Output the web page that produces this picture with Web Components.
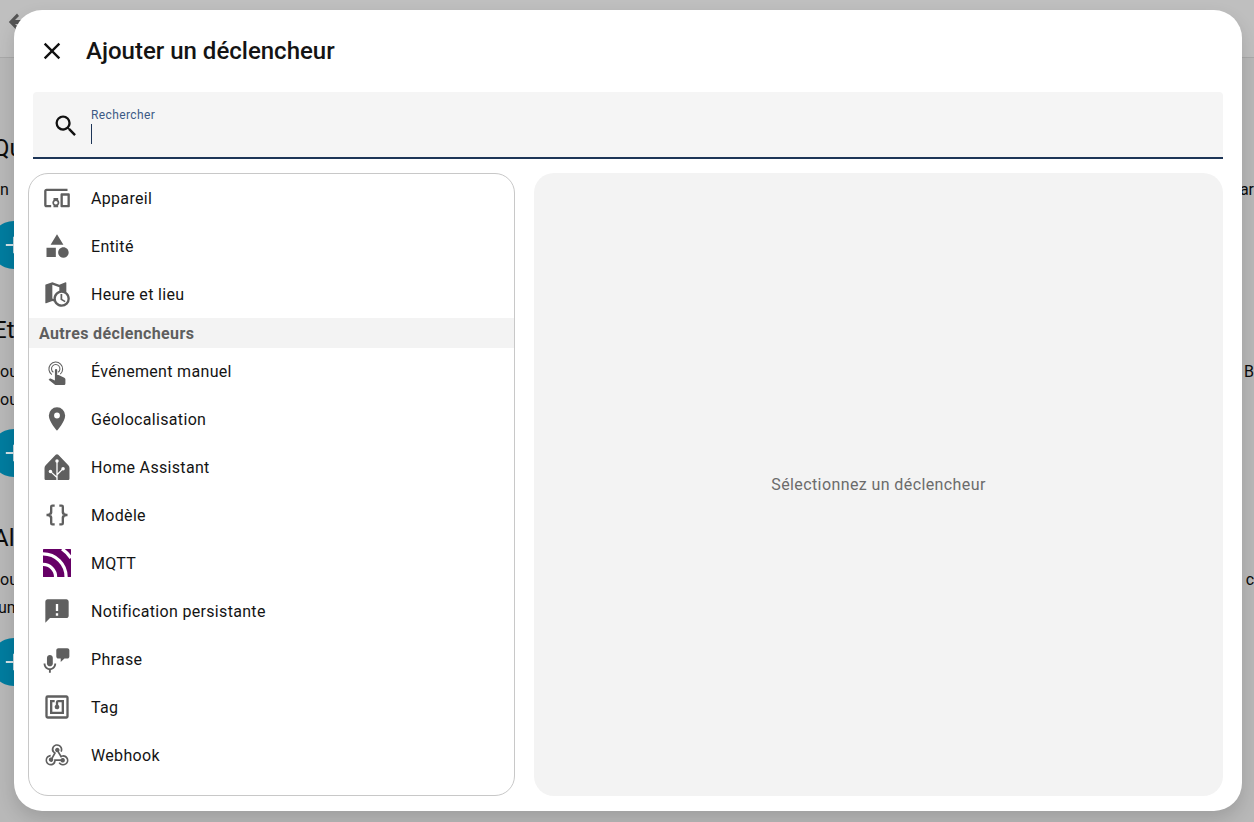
<!DOCTYPE html>
<html lang="fr">
<head>
<meta charset="utf-8">
<title>Ajouter un déclencheur</title>
<style>
  html, body {
    height: 100%;
    margin: 0;
    overflow: hidden;
  }

  body {
    color: #141414;
    font-family: Roboto, "Liberation Sans", sans-serif;
  }
</style>
</head>
<body>
<page-behind></page-behind>
<trigger-dialog heading="Ajouter un déclencheur">
  <search-field slot="search" label="Rechercher"></search-field>
  <trigger-row icon="devices">Appareil</trigger-row>
  <trigger-row icon="shape">Entité</trigger-row>
  <trigger-row icon="mapClock">Heure et lieu</trigger-row>
  <list-heading>Autres déclencheurs</list-heading>
  <trigger-row icon="tap">Événement manuel</trigger-row>
  <trigger-row icon="marker">Géolocalisation</trigger-row>
  <trigger-row icon="home">Home Assistant</trigger-row>
  <trigger-row icon="braces">Modèle</trigger-row>
  <trigger-row icon="mqtt">MQTT</trigger-row>
  <trigger-row icon="alert">Notification persistante</trigger-row>
  <trigger-row icon="phrase">Phrase</trigger-row>
  <trigger-row icon="nfc">Tag</trigger-row>
  <trigger-row icon="webhook">Webhook</trigger-row>
  <span slot="empty">Sélectionnez un déclencheur</span>
</trigger-dialog>

<script>
const HOOK = 'M10.46,19C9,21.07 6.15,21.59 4.09,20.15C2.04,18.71 1.56,15.84 3,13.75C3.87,12.5 5.21,11.83 6.58,11.77V13.2C5.62,13.27 4.69,13.76 4.1,14.62C3.1,16.08 3.38,18.05 4.74,19.01C6.11,19.97 8,19.63 9,18.17C9.31,17.72 9.5,17.22 9.56,16.72V15.71L15.12,15.68L15.19,15.57C15.71,14.64 16.9,14.31 17.81,14.84C18.73,15.37 19.05,16.55 18.53,17.47C18,18.38 16.8,18.71 15.88,18.18C15.46,17.94 15.15,17.55 15,17.11L10.9,17.13C10.8,17.73 10.7,18.4 10.46,19Z';

const ICONS = {
  back: '<path d="M20,10V14H10L14,18L12,20.5L3.8,12L12,3.5L14,6L10,10H20Z"/>',
  plus: '<path d="M19,12.8H12.8V19H11.2V12.8H5V11.2H11.2V5H12.8V11.2H19V12.8Z"/>',
  close: '<path d="M19,6.41L17.59,5L12,10.59L6.41,5L5,6.41L10.59,12L5,17.59L6.41,19L12,13.41L17.59,19L19,17.59L13.41,12L19,6.41Z"/>',
  magnify: '<path d="M9.5,3A6.5,6.5 0 0,1 16,9.5C16,11.11 15.41,12.59 14.44,13.73L14.71,14H15.5L20.5,19L19,20.5L14,15.5V14.71L13.73,14.44C12.59,15.41 11.11,16 9.5,16A6.5,6.5 0 0,1 3,9.5A6.5,6.5 0 0,1 9.5,3M9.5,5C7,5 5,7 5,9.5C5,12 7,14 9.5,14C12,14 14,12 14,9.5C14,7 12,5 9.5,5Z"/>',
  devices: '<path d="M3 6H21V4H3C1.9 4 1 4.9 1 6V18C1 19.1 1.9 20 3 20H7V18H3V6M13 12H9V13.78C8.39 14.33 8 15.11 8 16C8 16.89 8.39 17.67 9 18.22V20H13V18.22C13.61 17.67 14 16.88 14 16S13.61 14.33 13 13.78V12M11 17.5C10.17 17.5 9.5 16.83 9.5 16S10.17 14.5 11 14.5 12.5 15.17 12.5 16 11.83 17.5 11 17.5M22 8H16C15.5 8 15 8.5 15 9V19C15 19.5 15.5 20 16 20H22C22.5 20 23 19.5 23 19V9C23 8.5 22.5 8 22 8M21 18H17V10H21V18Z"/>',
  shape: '<path d="M11,13.5V21.5H3V13.5H11M12,2L17.5,11H6.5L12,2M17.5,13C20,13 22,15 22,17.5C22,20 20,22 17.5,22C15,22 13,20 13,17.5C13,15 15,13 17.5,13Z"/>',
  mapClock: '<path d="M15,12H16.5V16.25L19.36,17.94L18.61,19.16L15,17V12M23,16A7,7 0 0,1 16,23C13,23 10.4,21.08 9.42,18.4L8,17.9L2.66,19.97L2.5,20A0.5,0.5 0 0,1 2,19.5V4.38C2,4.15 2.15,3.97 2.36,3.9L8,2L14,4.1L19.34,2H19.5A0.5,0.5 0 0,1 20,2.5V10.25C21.81,11.5 23,13.62 23,16M9,16C9,12.83 11.11,10.15 14,9.29V6.11L8,4V15.89L9,16.24C9,16.16 9,16.08 9,16M16,11A5,5 0 0,0 11,16A5,5 0 0,0 16,21A5,5 0 0,0 21,16A5,5 0 0,0 16,11Z"/>',
  tap: '<g transform="translate(0.6 1.2)"><path d="M9.6,10A1,1 0 0,1 11.6,10V14.2L12.8,14.3L17.7,16.5C18.3,16.8 18.6,17.3 18.6,17.9V21.5C18.6,22.3 17.9,23 17.1,23H10.6C10.2,23 9.9,22.8 9.6,22.6L4.2,18.4L4.9,17.6C5.1,17.4 5.4,17.3 5.7,17.3H5.9L9.6,19V10Z"/></g><g fill="none" stroke="currentColor" stroke-width="0.9"><path d="M8.9,13.1A3.6,3.6 0 1,1 12.9,13.1"/><path d="M7.6,15.1A5.9,5.9 0 1,1 14.8,14.7"/></g>',
  marker: '<path d="M12,11.5A2.5,2.5 0 0,1 9.5,9A2.5,2.5 0 0,1 12,6.5A2.5,2.5 0 0,1 14.5,9A2.5,2.5 0 0,1 12,11.5M12,2A7,7 0 0,0 5,9C5,14.25 12,22 12,22C12,22 19,14.25 19,9A7,7 0 0,0 12,2Z"/>',
  home: '<path d="M10.9,1.6C11.5,1 12.5,1 13.1,1.6L21.7,10.6C22.3,11.2 22.7,12 22.7,12.9V21.8C22.7,22.6 22.1,23.2 21.3,23.2H2.7C1.9,23.2 1.3,22.6 1.3,21.8V12.9C1.3,12 1.7,11.2 2.3,10.6Z"/><g fill="none" stroke="#fff" stroke-width="1.1"><path d="M12,7V23.2M12,21L7,16.4M12,18.6L16.6,14"/></g><g fill="#fff"><circle cx="12" cy="6.8" r="1.5"/><circle cx="6.4" cy="15.8" r="1.5"/><circle cx="17.2" cy="13.4" r="1.5"/></g>',
  braces: '<path d="M8,3A2,2 0 0,0 6,5V9A2,2 0 0,1 4,11H3V13H4A2,2 0 0,1 6,15V19A2,2 0 0,0 8,21H10V19H8V14A2,2 0 0,0 6,12A2,2 0 0,0 8,10V5H10V3M16,3A2,2 0 0,1 18,5V9A2,2 0 0,0 20,11H21V13H20A2,2 0 0,0 18,15V19A2,2 0 0,1 16,21H14V19H16V14A2,2 0 0,1 18,12A2,2 0 0,1 16,10V5H14V3H16Z"/>',
  mqtt: '<rect width="24" height="24" rx="0.5" fill="#660066"/><g fill="none" stroke="#fff" stroke-width="2.8"><path d="M0,13.2A10.8,10.8 0 0,1 10.8,24"/><path d="M0,4.2A19.8,19.8 0 0,1 19.8,24"/><path d="M16.3,0A29,29 0 0,1 24,7.7"/></g>',
  alert: '<path d="M20,2H4C2.9,2 2,2.9 2,4V22L6,18H20C21.1,18 22,17.1 22,16V4C22,2.9 21.1,2 20,2M13,6V12H11V6H13M13,16H11V14H13V16Z"/>',
  phrase: '<g transform="translate(-2.1 0.8)"><path d="M8,7.8C6.6,7.8 5.5,8.9 5.5,10.3V15C5.5,16.4 6.6,17.5 8,17.5C9.4,17.5 10.5,16.4 10.5,15V10.3C10.5,8.9 9.4,7.8 8,7.8Z"/><path d="M13.4,15C13.4,18 11.2,20.2 8.8,20.6V23H7.2V20.6C4.8,20.2 2.6,18 2.6,15H4.2C4.2,17.4 6,19.1 8,19.1C10,19.1 11.8,17.4 11.8,15H13.4Z"/></g><path d="M13.2,2.8H20.8C21.8,2.8 22.6,3.6 22.6,4.6V9.8C22.6,10.8 21.8,11.6 20.8,11.6H18.4L15.2,14.6V11.6H13.2C12.2,11.6 11.4,10.8 11.4,9.8V4.6C11.4,3.6 12.2,2.8 13.2,2.8Z"/>',
  nfc: '<path d="M18,6H13A2,2 0 0,0 11,8V10.28C10.41,10.62 10,11.26 10,12A2,2 0 0,0 12,14C13.11,14 14,13.1 14,12C14,11.26 13.6,10.62 13,10.28V8H16V16H8V8H10V6H8L6,6V18H18M20,20H4V4H20M20,2H4A2,2 0 0,0 2,4V20A2,2 0 0,0 4,22H20C21.11,22 22,21.1 22,20V4C22,2.89 21.11,2 20,2Z"/>',
  webhook: `<path d="${HOOK}"/><path d="${HOOK}" transform="rotate(120 12 13.4)"/><path d="${HOOK}" transform="rotate(240 12 13.4)"/>`
};

function iconSvg( name ) {
  return `<svg viewBox="0 0 24 24" fill="currentColor" aria-hidden="true">${ICONS[name]}</svg>`;
}

// Automation editor, dimmed by the scrim of the dialog
class PageBehind extends HTMLElement {
  constructor() {
    super();

    const template = document.createElement( 'template' );
    template.innerHTML = /* template */ `
      <style>
        :host {
          background: #b8b8b8;
          box-sizing: border-box;
          color: #0c0c0c;
          display: block;
          font-family: Roboto, "Liberation Sans", sans-serif;
          font-size: 16px;
          height: 100vh;
          overflow: hidden;
        }

        header {
          align-items: center;
          background: #bfbfbf;
          border-bottom: 1px solid #a9a9a9;
          box-sizing: border-box;
          display: flex;
          height: 58px;
          padding: 0 0 13px 5px;
        }

        header svg {
          color: #555555;
          height: 24px;
          width: 24px;
        }

        main {
          display: flex;
          flex-direction: column;
          gap: 45px;
          padding-top: 74px;
        }

        h2 {
          font-size: 24px;
          font-weight: 400;
          line-height: 32px;
          margin: 0 0 12px -7px;
        }

        .row {
          display: flex;
          justify-content: space-between;
          line-height: 28px;
        }

        .link {
          color: #1a4a8a;
        }

        .fab {
          align-items: center;
          background: #007c9f;
          border-radius: 50%;
          color: #d4e2e7;
          display: flex;
          height: 48px;
          justify-content: center;
          margin: 16px 0 0 -10px;
          width: 48px;
        }

        .fab svg {
          height: 28px;
          width: 28px;
        }
      </style>
      <header>${iconSvg( 'back' )}</header>
      <main>
        <section>
          <h2>Quand</h2>
          <div class="row"><span>n</span><span>ar</span></div>
          <div class="fab" style="margin-top: 17px">${iconSvg( 'plus' )}</div>
        </section>
        <section>
          <h2>Et si</h2>
          <div class="row"><span>ou</span><span>B</span></div>
          <div class="row"><span>ou</span></div>
          <div class="fab" style="margin-top: 15px">${iconSvg( 'plus' )}</div>
        </section>
        <section>
          <h2>Alors</h2>
          <div class="row"><span>ou</span><span><span class="link">s</span> c</span></div>
          <div class="row"><span style="margin-left: -2px">um</span></div>
          <div class="fab">${iconSvg( 'plus' )}</div>
        </section>
      </main>
    `;

    this.attachShadow( {mode: 'open'} );
    this.shadowRoot.appendChild( template.content.cloneNode( true ) );
  }
}

class SearchField extends HTMLElement {
  constructor() {
    super();

    const template = document.createElement( 'template' );
    template.innerHTML = /* template */ `
      <style>
        :host {
          align-items: center;
          background: #f5f5f5;
          border-bottom: 2px solid #1d3557;
          border-top-left-radius: 4px;
          border-top-right-radius: 4px;
          box-sizing: border-box;
          display: flex;
          height: 67px;
          padding: 2px 0 0 19px;
        }

        svg {
          color: #111111;
          flex: none;
          height: 28px;
          margin-right: 11px;
          width: 28px;
        }

        div {
          display: flex;
          flex-direction: column;
        }

        label {
          color: #3c5a85;
          font-size: 12px;
          letter-spacing: 0.4px;
          line-height: 14px;
        }

        i {
          background: #1d3557;
          height: 20px;
          margin-top: 2px;
          width: 1px;
        }
      </style>
      ${iconSvg( 'magnify' )}
      <div><label></label><i></i></div>
    `;

    this.attachShadow( {mode: 'open'} );
    this.shadowRoot.appendChild( template.content.cloneNode( true ) );
    this.shadowRoot.querySelector( 'label' ).textContent = this.getAttribute( 'label' );
  }
}

class TriggerRow extends HTMLElement {
  constructor() {
    super();

    const template = document.createElement( 'template' );
    template.innerHTML = /* template */ `
      <style>
        :host {
          align-items: center;
          color: #141414;
          cursor: pointer;
          display: flex;
          font-size: 16px;
          gap: 20px;
          height: 48px;
          letter-spacing: 0.32px;
          padding-left: 14px;
        }

        span {
          color: #5f5f5f;
          display: flex;
          height: 28px;
          width: 28px;
        }

        svg {
          height: 100%;
          width: 100%;
        }
      </style>
      <span>${iconSvg( this.getAttribute( 'icon' ) )}</span>
      <slot></slot>
    `;

    this.attachShadow( {mode: 'open'} );
    this.shadowRoot.appendChild( template.content.cloneNode( true ) );
  }
}

class ListHeading extends HTMLElement {
  constructor() {
    super();

    const template = document.createElement( 'template' );
    template.innerHTML = /* template */ `
      <style>
        :host {
          align-items: center;
          background: #f3f3f3;
          color: #5f5f5f;
          display: flex;
          font-size: 16px;
          font-weight: 700;
          height: 30px;
          letter-spacing: 0.36px;
          margin-bottom: -1px;
          padding-left: 10px;
        }
      </style>
      <slot></slot>
    `;

    this.attachShadow( {mode: 'open'} );
    this.shadowRoot.appendChild( template.content.cloneNode( true ) );
  }
}

class TriggerDialog extends HTMLElement {
  constructor() {
    super();

    const template = document.createElement( 'template' );
    template.innerHTML = /* template */ `
      <style>
        :host {
          background: #ffffff;
          border-radius: 28px;
          box-shadow: 0 8px 18px rgba( 0, 0, 0, 0.14 );
          box-sizing: border-box;
          display: flex;
          flex-direction: column;
          height: 801px;
          left: 14px;
          padding: 0 19px 15px 14px;
          position: absolute;
          top: 10px;
          width: 1228px;
        }

        header {
          align-items: center;
          display: flex;
          flex: none;
          height: 82px;
          padding-left: 10px;
        }

        header svg {
          color: #111111;
          height: 28px;
          margin-right: 20px;
          width: 28px;
        }

        h1 {
          color: #141414;
          font-size: 24px;
          font-weight: 500;
          margin: 0;
        }

        .search {
          flex: none;
          margin-left: 5px;
        }

        .body {
          display: flex;
          flex: 1;
          gap: 19px;
          margin-top: 14px;
          min-height: 0;
        }

        .list {
          border: 1px solid #c8c8c8;
          border-radius: 20px;
          box-sizing: border-box;
          flex: none;
          overflow: hidden;
          width: 487px;
        }

        .empty {
          align-items: center;
          background: #f3f3f3;
          border-radius: 20px;
          color: #6b6b6b;
          display: flex;
          flex: 1;
          font-size: 16px;
          justify-content: center;
          letter-spacing: 0.4px;
        }
      </style>
      <header>${iconSvg( 'close' )}<h1></h1></header>
      <div class="search"><slot name="search"></slot></div>
      <div class="body">
        <div class="list"><slot></slot></div>
        <div class="empty"><slot name="empty"></slot></div>
      </div>
    `;

    this.attachShadow( {mode: 'open'} );
    this.shadowRoot.appendChild( template.content.cloneNode( true ) );
    this.shadowRoot.querySelector( 'h1' ).textContent = this.getAttribute( 'heading' );
  }
}

window.customElements.define( 'page-behind', PageBehind );
window.customElements.define( 'search-field', SearchField );
window.customElements.define( 'trigger-row', TriggerRow );
window.customElements.define( 'list-heading', ListHeading );
window.customElements.define( 'trigger-dialog', TriggerDialog );
</script>
</body>
</html>
